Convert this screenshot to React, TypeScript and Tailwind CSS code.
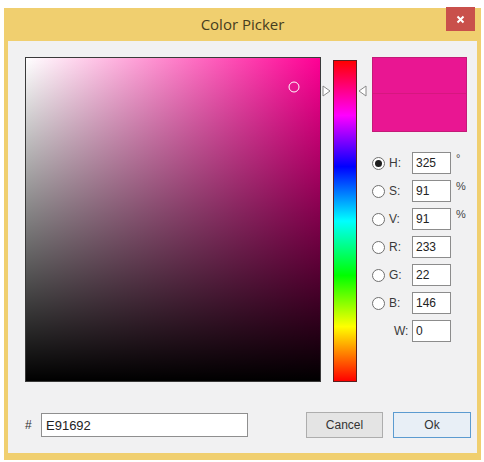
import { useState } from "react";

const HUE = 325;
const SAT = 91;
const VAL = 91;

type Field = { key: string; label: string; value: string; unit?: string; radio: boolean };

const fields: Field[] = [
  { key: "h", label: "H:", value: "325", unit: "°", radio: true },
  { key: "s", label: "S:", value: "91", unit: "%", radio: true },
  { key: "v", label: "V:", value: "91", unit: "%", radio: true },
  { key: "r", label: "R:", value: "233", radio: true },
  { key: "g", label: "G:", value: "22", radio: true },
  { key: "b", label: "B:", value: "146", radio: true },
  { key: "w", label: "W:", value: "0", radio: false },
];

const uiFont = { fontFamily: "'Liberation Sans', Arial, sans-serif" };

function Arrow({ dir }: { dir: "right" | "left" }) {
  return (
    <svg width="9" height="12" viewBox="0 0 9 12">
      {dir === "right" ? (
        <path d="M1 1 L8 6 L1 11 Z" fill="#fff" stroke="#8a8a8a" strokeWidth="1" />
      ) : (
        <path d="M8 1 L1 6 L8 11 Z" fill="#fff" stroke="#8a8a8a" strokeWidth="1" />
      )}
    </svg>
  );
}

function Radio({ checked }: { checked: boolean }) {
  return (
    <span className="flex h-[13px] w-[13px] items-center justify-center rounded-full border border-[#707070] bg-white">
      {checked && <span className="h-[7px] w-[7px] rounded-full bg-[#1e1e1e]" />}
    </span>
  );
}

export default function App() {
  const [mode, setMode] = useState("h");
  const markerTop = ((360 - HUE) / 360) * 322;

  return (
    <div className="h-[462px] w-[484px] bg-white pl-[4px] pt-[8px]" style={uiFont}>
      <div className="flex h-[452px] w-[477px] flex-col bg-[#f0cf6f] px-[4px] pb-[7px]">
        {/* Title bar */}
        <div className="grid h-[33px] grid-cols-[1fr_auto_1fr] items-start">
          <div />
          <div
            className="pt-[6px] text-[15px] leading-[20px] text-[#463d1e]"
            style={{ fontFamily: "'Open Sans', 'Noto Sans', sans-serif" }}
          >
            Color Picker
          </div>
          <div className="flex justify-end pr-[2px]">
            <button className="-mt-[1px] flex h-[24px] w-[29px] items-center justify-center bg-[#c9504b]">
              <svg width="9" height="9" viewBox="0 0 9 9">
                <path d="M1.5 1.5 L7.5 7.5 M7.5 1.5 L1.5 7.5" stroke="#fff" strokeWidth="2" />
              </svg>
            </button>
          </div>
        </div>

        {/* Client area */}
        <div className="flex flex-1 flex-col bg-[#f1f1f2] pl-[17px] pt-[16px]">
          <div className="flex">
            {/* Saturation / value field */}
            <div
              className="relative h-[325px] w-[296px] border border-[#3a3a3a]"
              style={{
                background: `linear-gradient(to bottom, rgba(0,0,0,0), #000), linear-gradient(to right, #fff, hsl(${HUE}, 100%, 50%))`,
              }}
            >
              <span
                className="absolute h-[11px] w-[11px] -translate-x-1/2 -translate-y-1/2 rounded-full border border-white"
                style={{ left: `${(SAT / 100) * 294}px`, top: `${(1 - VAL / 100) * 323}px` }}
              />
            </div>

            {/* Hue strip */}
            <div className="relative ml-[12px] mt-[3px] h-[322px] w-[24px]">
              <div
                className="h-full w-full border border-[#5a2020]"
                style={{
                  background:
                    "linear-gradient(to bottom, #ff0000, #ff00ff 17%, #0000ff 33%, #00ffff 50%, #00ff00 67%, #ffff00 83%, #ff0000)",
                }}
              />
              <div className="absolute -left-[11px] -translate-y-1/2" style={{ top: markerTop }}>
                <Arrow dir="right" />
              </div>
              <div className="absolute -right-[10px] -translate-y-1/2" style={{ top: markerTop }}>
                <Arrow dir="left" />
              </div>
            </div>

            {/* Preview and fields */}
            <div className="ml-[15px] flex flex-col">
              <div className="relative h-[75px] w-[95px] border border-[#c41a78] bg-[#e91692]">
                <div className="absolute left-0 right-0 top-[35px] h-px bg-[#d6177f]" />
              </div>
              <div className="mt-[20px] flex flex-col gap-[6px] text-[12px] text-[#3a3a3a]">
                {fields.map((f) => (
                  <div key={f.key} className="flex h-[22px] items-center">
                    <div className="flex w-[40px] items-center">
                      {f.radio ? (
                        <>
                          <button onClick={() => setMode(f.key)} className="flex">
                            <Radio checked={mode === f.key} />
                          </button>
                          <span className="ml-[4px]">{f.label}</span>
                        </>
                      ) : (
                        <span className="ml-[22px]">{f.label}</span>
                      )}
                    </div>
                    <input
                      readOnly
                      value={f.value}
                      className="h-[22px] w-[39px] border border-[#8c8c8c] bg-white px-[3px] text-[12px] text-[#222] outline-none"
                    />
                    {f.unit && (
                      <span className="ml-[5px] self-start text-[11px] leading-[12px] text-[#444]">{f.unit}</span>
                    )}
                  </div>
                ))}
              </div>
            </div>
          </div>

          {/* Hex and buttons */}
          <div className="mt-[30px] flex items-center">
            <span className="w-[16px] text-[12px] text-[#333]">#</span>
            <input
              readOnly
              value="E91692"
              className="h-[24px] w-[207px] border border-[#8f8f8f] bg-white px-[4px] text-[13px] text-[#222] outline-none"
            />
            <button className="ml-[58px] h-[26px] w-[77px] border border-[#adadad] bg-[#e4e4e4] text-[12px] text-[#333]">
              Cancel
            </button>
            <button className="ml-[10px] h-[26px] w-[78px] border border-[#5b9bd0] bg-[#e8eff6] text-[12px] text-[#333]">
              Ok
            </button>
          </div>
        </div>
      </div>
    </div>
  );
}
